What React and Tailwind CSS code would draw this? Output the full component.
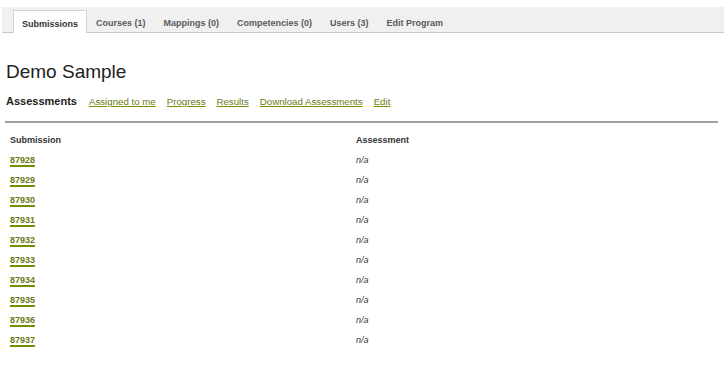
import React from 'react';

const TABS = ['Submissions', 'Courses (1)', 'Mappings (0)', 'Competencies (0)', 'Users (3)', 'Edit Program'];
const LINKS = ['Assigned to me', 'Progress', 'Results', 'Download Assessments', 'Edit'];
const ROWS = [87928, 87929, 87930, 87931, 87932, 87933, 87934, 87935, 87936, 87937];

export default function App() {
  return (
    <div className="w-[724px] h-[365px] bg-white text-[#222] overflow-hidden" style={{ fontFamily: '"Liberation Sans", Arial, sans-serif' }}>
      <div className="mt-[7px] ml-[2px] h-[26px] bg-[#f0f0f0] border-b border-[#c8c8c8] flex items-end pl-[11px]">
        {TABS.map((t, i) => (
          <div
            key={t}
            className={`flex items-center px-[8px] pt-[5px] text-[9px] font-bold ${
              i === 0 ? 'bg-white border border-b-0 border-[#d4d4d4] text-[#333] -mb-px h-[23px]' : 'h-[22px] text-[#5a5a5a] border border-transparent'
            }`}
          >
            {t}
          </div>
        ))}
      </div>

      <h1 className="mt-[28px] ml-[6px] text-[19px] leading-[22px] text-[#222]">Demo Sample</h1>

      <div className="mt-[10px] ml-[6px] flex items-baseline gap-[11px]">
        <span className="text-[11px] font-bold text-[#222] mr-[1px]">Assessments</span>
        {LINKS.map(l => (
          <a key={l} className="text-[9.7px] text-[#6b7a14] underline decoration-[#7a8c00]">{l}</a>
        ))}
      </div>

      <div className="mt-[11px] mx-[5px] h-[2px] bg-[#a0a0a0] w-[713px]"></div>

      <div className="mt-[11px] ml-[10px] text-[9px]">
        <div className="flex h-[20px] items-start font-bold text-[#333]">
          <div className="w-[346px]">Submission</div>
          <div>Assessment</div>
        </div>
        {ROWS.map(r => (
          <div key={r} className="flex h-[20px] items-start">
            <div className="w-[346px]">
              <a className="font-bold text-[#6b7a14] border-b-2 border-[#7a8c00] leading-[9px] inline-block">{r}</a>
            </div>
            <div className="italic text-[#333]">n/a</div>
          </div>
        ))}
      </div>
    </div>
  );
}
